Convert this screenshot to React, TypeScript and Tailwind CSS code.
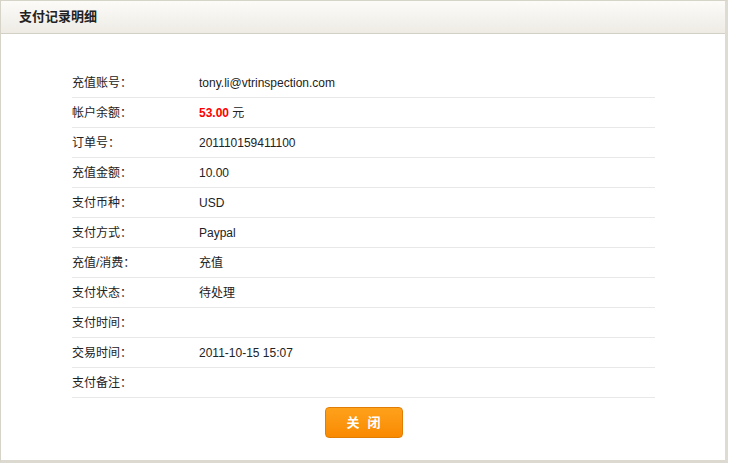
import React from "react";

const rows: { label: string; value: React.ReactNode }[] = [
  { label: "充值账号：", value: "tony.li@vtrinspection.com" },
  {
    label: "帐户余额：",
    value: (
      <span>
        <span className="font-bold text-[#ff0000]">53.00</span> 元
      </span>
    ),
  },
  { label: "订单号：", value: "201110159411100" },
  { label: "充值金额：", value: "10.00" },
  { label: "支付币种：", value: "USD" },
  { label: "支付方式：", value: "Paypal" },
  { label: "充值/消费：", value: "充值" },
  { label: "支付状态：", value: "待处理" },
  { label: "支付时间：", value: "" },
  { label: "交易时间：", value: "2011-10-15 15:07" },
  { label: "支付备注：", value: "" },
];

export default function App() {
  return (
    <div
      className="w-[730px] h-[466px] bg-white"
      style={{ fontFamily: '"Liberation Sans", "Noto Sans CJK SC", sans-serif' }}
    >
      <div className="w-[728px] h-[463px] border border-[#d6d3c9] border-r-[3px] border-r-[#dedbd2] border-b-[3px] border-b-[#dcd9d0] flex flex-col">
        <div className="h-[33px] shrink-0 bg-gradient-to-b from-[#fcfbf8] to-[#eeebe5] border-b border-[#d3d0c6] flex items-center pl-[18px]">
          <span className="text-[13px] font-bold text-[#222]">支付记录明细</span>
        </div>
        <div className="flex flex-col pt-[34px] pl-[71px] pr-[70px]">
          {rows.map((r, i) => (
            <div
              key={i}
              className="h-[30px] flex items-center border-b border-[#e8e8e8] text-[12px] text-[#222]"
            >
              <div className="w-[127px] shrink-0">{r.label}</div>
              <div>{r.value}</div>
            </div>
          ))}
        </div>
        <div className="flex justify-center pt-[9px] pl-[1px]">
          <button className="w-[78px] h-[31px] rounded-[4px] border border-[#e07d05] bg-gradient-to-b from-[#ffa11a] to-[#f98a00] text-white font-bold text-[13px] tracking-[8px] pl-[8px]">
            关闭
          </button>
        </div>
      </div>
    </div>
  );
}
